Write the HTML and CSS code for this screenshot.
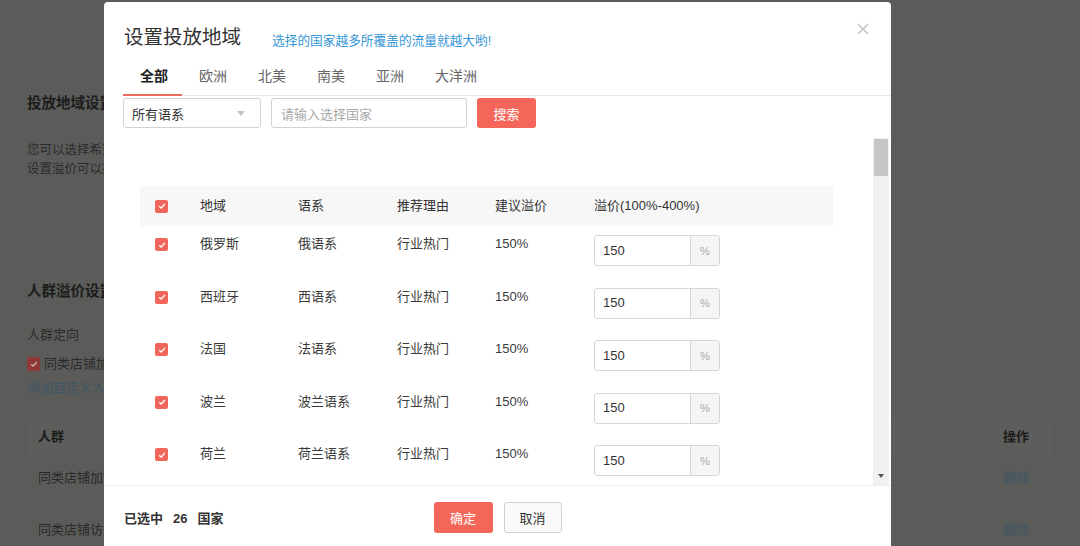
FILE: index.html
```html
<!DOCTYPE html>
<html lang="zh-CN">
<head>
<meta charset="utf-8">
<title>设置投放地域</title>
<link rel="stylesheet" href="styles.css">
</head>
<body>
<div class="page">
  <section class="sec sec-geo">
    <h2 class="sec-title">投放地域设置</h2>
    <p class="sec-desc first">您可以选择希望投放的国家和地区，系统将根据您的选择进行投放</p>
    <p class="sec-desc">设置溢价可以提高商品在对应地域的曝光机会</p>
  </section>
  <section class="sec sec-crowd">
    <h2 class="sec-title">人群溢价设置</h2>
    <div class="bg-label">人群定向</div>
    <div class="bg-chk-line"><span class="bg-chk"><svg viewBox="0 0 10 10"><path d="M2.2 5.2 4.2 7.1 7.8 3" /></svg></span>同类店铺加购人群</div>
    <a class="bg-link">添加自定义人群</a>
    <div class="bg-table">
      <div class="bg-row bg-head"><span>人群</span><span class="bg-op">操作</span></div>
      <div class="bg-row"><span>同类店铺加购人群</span><span class="bg-op bg-op-link">删除</span></div>
      <div class="bg-row"><span>同类店铺访问人群</span><span class="bg-op bg-op-link">删除</span></div>
    </div>
  </section>
</div>

<div class="modal">
  <div class="m-head">
    <h1 class="m-title">设置投放地域</h1>
    <span class="m-tip">选择的国家越多所覆盖的流量就越大哟!</span>
    <span class="m-close"><svg viewBox="0 0 12 12"><path d="M1 1 11 11M11 1 1 11" /></svg></span>
  </div>
  <nav class="tabs">
    <a class="tab active">全部</a>
    <a class="tab">欧洲</a>
    <a class="tab">北美</a>
    <a class="tab">南美</a>
    <a class="tab">亚洲</a>
    <a class="tab">大洋洲</a>
  </nav>
  <div class="filters">
    <div class="select">所有语系<span class="caret"></span></div>
    <div class="search-input">请输入选择国家</div>
    <button class="btn btn-primary btn-search">搜索</button>
  </div>
  <div class="list-wrap">
    <div class="list">
      <div class="grid-row head">
        <span class="cell cell-chk"><span class="chk"><svg viewBox="0 0 10 10"><path d="M2.2 5.2 4.2 7.1 7.8 3" /></svg></span></span>
        <span class="cell">地域</span>
        <span class="cell">语系</span>
        <span class="cell">推荐理由</span>
        <span class="cell">建议溢价</span>
        <span class="cell">溢价(100%-400%)</span>
      </div>
      <div class="grid-row">
        <span class="cell cell-chk"><span class="chk"><svg viewBox="0 0 10 10"><path d="M2.2 5.2 4.2 7.1 7.8 3" /></svg></span></span>
        <span class="cell">俄罗斯</span>
        <span class="cell">俄语系</span>
        <span class="cell">行业热门</span>
        <span class="cell">150%</span>
        <span class="cell"><span class="pct-input"><span class="pct-val">150</span><span class="pct-addon">%</span></span></span>
      </div>
      <div class="grid-row">
        <span class="cell cell-chk"><span class="chk"><svg viewBox="0 0 10 10"><path d="M2.2 5.2 4.2 7.1 7.8 3" /></svg></span></span>
        <span class="cell">西班牙</span>
        <span class="cell">西语系</span>
        <span class="cell">行业热门</span>
        <span class="cell">150%</span>
        <span class="cell"><span class="pct-input"><span class="pct-val">150</span><span class="pct-addon">%</span></span></span>
      </div>
      <div class="grid-row">
        <span class="cell cell-chk"><span class="chk"><svg viewBox="0 0 10 10"><path d="M2.2 5.2 4.2 7.1 7.8 3" /></svg></span></span>
        <span class="cell">法国</span>
        <span class="cell">法语系</span>
        <span class="cell">行业热门</span>
        <span class="cell">150%</span>
        <span class="cell"><span class="pct-input"><span class="pct-val">150</span><span class="pct-addon">%</span></span></span>
      </div>
      <div class="grid-row">
        <span class="cell cell-chk"><span class="chk"><svg viewBox="0 0 10 10"><path d="M2.2 5.2 4.2 7.1 7.8 3" /></svg></span></span>
        <span class="cell">波兰</span>
        <span class="cell">波兰语系</span>
        <span class="cell">行业热门</span>
        <span class="cell">150%</span>
        <span class="cell"><span class="pct-input"><span class="pct-val">150</span><span class="pct-addon">%</span></span></span>
      </div>
      <div class="grid-row">
        <span class="cell cell-chk"><span class="chk"><svg viewBox="0 0 10 10"><path d="M2.2 5.2 4.2 7.1 7.8 3" /></svg></span></span>
        <span class="cell">荷兰</span>
        <span class="cell">荷兰语系</span>
        <span class="cell">行业热门</span>
        <span class="cell">150%</span>
        <span class="cell"><span class="pct-input"><span class="pct-val">150</span><span class="pct-addon">%</span></span></span>
      </div>
    </div>
    <div class="scrollbar">
      <div class="thumb"></div>
      <div class="arrow-down"></div>
    </div>
  </div>
  <div class="m-foot">
    <div class="count">已选中<span class="num">26</span>国家</div>
    <div class="actions">
      <button class="btn btn-primary">确定</button>
      <button class="btn btn-default">取消</button>
    </div>
    <div></div>
  </div>
</div>
</body>
</html>
```

FILE: styles.css
```css
* { box-sizing: border-box; }

html, body {
  margin: 0;
  padding: 0;
}

body {
  width: 1080px;
  height: 546px;
  overflow: hidden;
  position: relative;
  background: #5b5c5a;
  font-family: "Liberation Sans", "Noto Sans CJK SC", sans-serif;
  color: #333;
}

/* ---------- dimmed background page ---------- */
.page {
  padding: 93px 27px 0 27px;
  color: #262726;
}

.sec-title {
  margin: 0;
  font-size: 14.5px;
  line-height: 20px;
  font-weight: bold;
  color: #1b1c1b;
}

.sec-desc {
  margin: 0;
  font-size: 12.5px;
  line-height: 19px;
  color: #2a2b2a;
}

.sec-desc.first { margin-top: 28px; }

.sec-crowd { margin-top: 102px; }

.bg-label {
  margin-top: 25px;
  font-size: 13px;
  line-height: 18px;
  color: #2a2b2a;
}

.bg-chk-line {
  margin-top: 11px;
  display: flex;
  align-items: center;
  gap: 4px;
  font-size: 13px;
  line-height: 18px;
  color: #2a2b2a;
}

.bg-chk {
  width: 13px;
  height: 14px;
  border-radius: 2px;
  background: #8f3838;
  display: flex;
  align-items: center;
  justify-content: center;
}

.bg-chk svg { width: 10px; height: 10px; }
.bg-chk path { fill: none; stroke: #c9b1b1; stroke-width: 1.4; }

.bg-link {
  display: block;
  margin-top: 6px;
  font-size: 13px;
  line-height: 18px;
  color: #3e5666;
}

.bg-table {
  margin-top: 20px;
}

.bg-row {
  display: flex;
  justify-content: space-between;
  height: 52px;
  padding: 12px 0 0 11px;
  font-size: 13px;
  line-height: 18px;
  color: #282928;
}

.bg-head {
  height: 40px;
  padding-top: 0;
  align-items: center;
  background: #5d5e5c;
  color: #1b1c1b;
  font-weight: bold;
}

.bg-op { width: 50px; }
.bg-op-link { color: #3e5666; }

/* ---------- modal ---------- */
.modal {
  position: absolute;
  left: 104px;
  top: 2px;
  width: 787px;
  height: 570px;
  background: #fff;
  border-radius: 4px 4px 0 0;
  display: flex;
  flex-direction: column;
}

.m-head {
  display: flex;
  align-items: flex-start;
  height: 48px;
  padding: 22px 0 0 20px;
}

.m-title {
  margin: 0;
  font-size: 19.5px;
  line-height: 26px;
  font-weight: normal;
  color: #333;
}

.m-tip {
  margin: 8px 0 0 31px;
  font-size: 12.7px;
  line-height: 18px;
  color: #3596d6;
}

.m-close {
  margin: -1px 22px 0 auto;
  width: 12px;
  height: 12px;
  display: block;
}

.m-close svg { display: block; width: 12px; height: 12px; }
.m-close path { stroke: #c2c2c2; stroke-width: 1.5; fill: none; }

.tabs {
  display: flex;
  margin: 11px 0 0 19px;
  border-bottom: 1px solid #e8e8e8;
}

.tab {
  padding: 0 14px 2px 17px;
  font-size: 14px;
  line-height: 31px;
  color: #666;
  border-bottom: 2px solid transparent;
  margin-bottom: -1px;
}

.tab.active {
  color: #222;
  font-weight: bold;
  border-bottom-color: #ee6b60;
}

.filters {
  display: flex;
  gap: 10px;
  margin: 2px 0 0 19px;
}

.select {
  width: 138px;
  height: 30px;
  border: 1px solid #d2d2d2;
  border-radius: 3px;
  padding: 0 0 0 8px;
  display: flex;
  align-items: center;
  justify-content: space-between;
  font-size: 13px;
  color: #333;
}

.caret {
  margin-right: 15px;
  width: 0;
  height: 0;
  border-top: 5px solid #c4c4c4;
  border-left: 4px solid transparent;
  border-right: 4px solid transparent;
}

.search-input {
  width: 196px;
  height: 30px;
  border: 1px solid #d2d2d2;
  border-radius: 3px;
  padding-left: 9px;
  display: flex;
  align-items: center;
  font-size: 13px;
  color: #a9a9a9;
}

.btn {
  height: 31px;
  border-radius: 3px;
  font-family: inherit;
  font-size: 13px;
  padding: 0;
  cursor: pointer;
}

.btn-primary {
  width: 59px;
  border: none;
  background: #f4665a;
  color: #fff;
}

.btn-search { height: 30px; }

.btn-default {
  width: 58px;
  border: 1px solid #d0d0d0;
  background: #f9f9f9;
  color: #333;
}

/* ---------- list ---------- */
.list-wrap {
  margin-top: 10px;
  height: 347px;
  display: flex;
}

.list {
  flex: 1;
  overflow: hidden;
  padding: 48px 0 0 36px;
}

.grid-row {
  width: 693px;
  display: grid;
  grid-template-columns: 60px 98px 99px 98px 99px 1fr;
  align-items: start;
  height: 52.5px;
  padding-top: 9px;
  font-size: 13px;
  line-height: 18px;
  color: #3a3a3a;
}

.grid-row.head {
  height: 40px;
  padding-top: 0;
  align-items: center;
  background: #f7f7f7;
  color: #333;
}

.cell-chk {
  padding-left: 15px;
  display: flex;
  padding-top: 3px;
}

.head .cell-chk { padding-top: 0; }

.chk {
  width: 13px;
  height: 13px;
  border-radius: 2px;
  background: #f0665a;
  display: flex;
  align-items: center;
  justify-content: center;
}

.chk svg { width: 10px; height: 10px; display: block; }
.chk path { fill: none; stroke: #fff; stroke-width: 1.4; }

.pct-input {
  display: flex;
  width: 126px;
  height: 31px;
  border: 1px solid #d6d6d6;
  border-radius: 3px;
  overflow: hidden;
}

.pct-val {
  flex: 1;
  padding-left: 8px;
  display: flex;
  align-items: center;
  font-size: 13px;
  color: #333;
}

.pct-addon {
  width: 29px;
  border-left: 1px solid #d6d6d6;
  background: #f5f5f5;
  display: flex;
  align-items: center;
  justify-content: center;
  font-size: 11px;
  color: #aaa;
}

.scrollbar {
  width: 16px;
  margin-right: 2px;
  background: #f1f1f1;
  display: flex;
  flex-direction: column;
  justify-content: space-between;
  align-items: center;
  padding: 1px 0 7px;
}

.thumb {
  width: 14px;
  height: 37px;
  background: #c6c6c6;
}

.arrow-down {
  width: 0;
  height: 0;
  border-top: 4px solid #555;
  border-left: 3.5px solid transparent;
  border-right: 3.5px solid transparent;
}

/* ---------- footer ---------- */
.m-foot {
  border-top: 1px solid #eeeeee;
  display: grid;
  grid-template-columns: 1fr auto 1fr;
  align-items: start;
  padding-top: 16px;
}

.count {
  padding: 8px 0 0 20px;
  font-size: 13px;
  line-height: 18px;
  color: #333;
  font-weight: bold;
}

.count .num { margin: 0 10px; }

.actions {
  display: flex;
  gap: 11px;
}
```
